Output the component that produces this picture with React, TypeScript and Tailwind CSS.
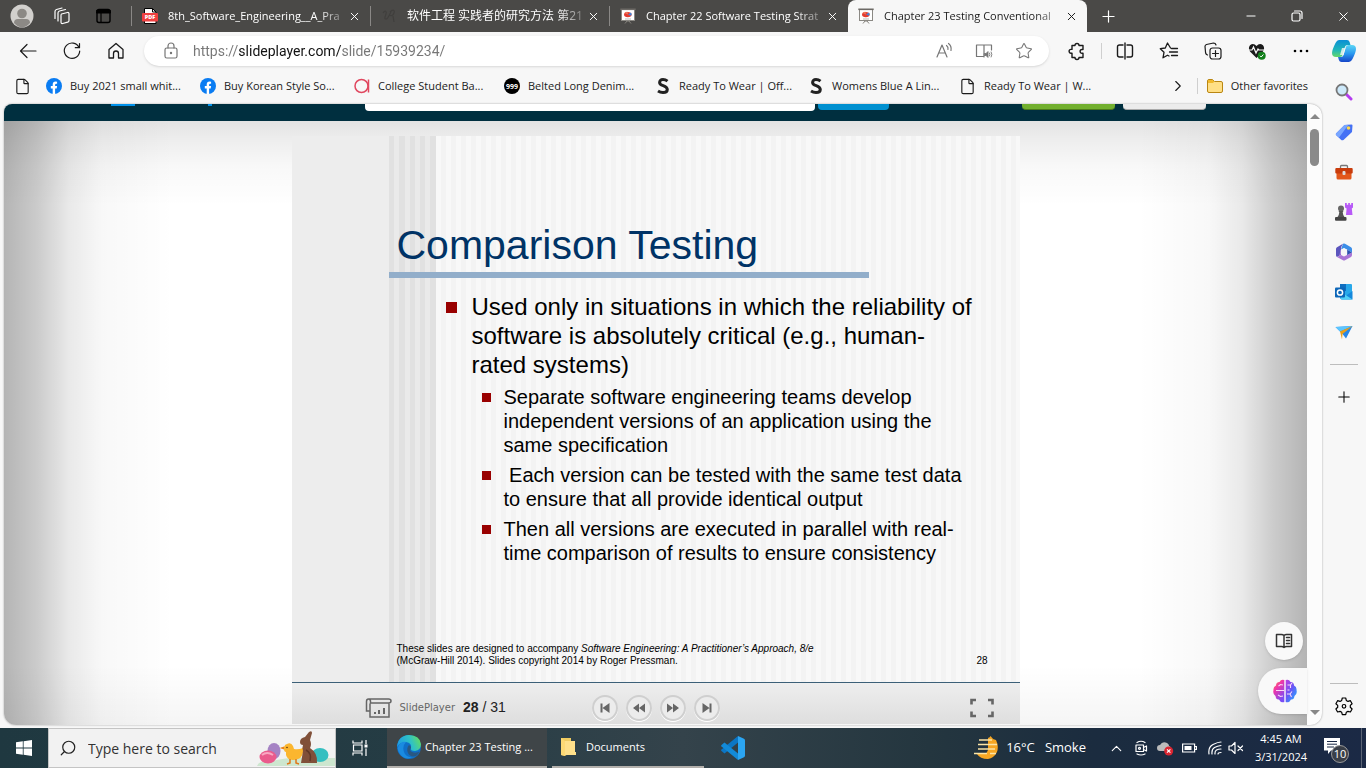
import React from "react";
import { X, Plus, Minus, ChevronUp, ChevronRight, Star, File, Search } from "lucide-react";

const ui = "font-['Open_Sans','Noto_Sans_CJK_SC',sans-serif]";

type IconProps = { className?: string; children: React.ReactNode; box?: string };
function Line({ className = "size-5", children, box = "0 0 20 20" }: IconProps) {
  return (
    <svg viewBox={box} className={`shrink-0 ${className}`} fill="none" stroke="currentColor" strokeWidth="1.2" strokeLinecap="round" strokeLinejoin="round" aria-hidden="true">
      {children}
    </svg>
  );
}
function Art({ className = "size-4", children, box = "0 0 16 16" }: IconProps) {
  return (
    <svg viewBox={box} className={`shrink-0 ${className}`} aria-hidden="true">
      {children}
    </svg>
  );
}

const PdfIcon = () => (
  <Art>
    <path d="M2.500 .5h8l3.500 3.500v11.500h-11.500z" fill="#fff" stroke="#000" />
    <path d="M10.500 .5V4H14" fill="none" stroke="#000" />
    <rect x="0" y="5" width="16" height="8.500" rx="1" fill="#f04040" />
    <text x="8" y="11.300" fontSize="5.500" fontWeight="800" textAnchor="middle" fill="#fff" fontFamily="Open Sans">PDF</text>
  </Art>
);
const SwirlIcon = () => (
  <Art>
    <path d="M2 5c2-3 4-2 3 1s-2 5 0 5 3-4 5-7M9 4c3-3 5-2 4 1s-3 3-5 2M12 8l1 6" fill="none" stroke="#403f3d" strokeWidth="1.200" />
  </Art>
);
const BoardIcon = () => (
  <Art>
    <path d="M5 15.500l2-2.500h2l2 2.500" fill="none" stroke="#85827d" />
    <rect x="1.500" y="1.500" width="13" height="11" fill="#fff" stroke="#8b8984" />
    <path d="M.3 1.300h15.400" stroke="#6d6a66" strokeWidth="1.600" />
    <ellipse cx="7.800" cy="6.600" rx="3.800" ry="2.700" fill="#e33b31" />
    <path d="M8 6.500l3-2q1.500 2 0 3.300z" fill="#4385d8" />
    <path d="M8 6.500l-3.500-1.500q1-1.300 3-1.200z" fill="#f1765a" />
    <path d="M5 11h6" stroke="#bbb" />
  </Art>
);

const tabs = [
  { title: "8th_Software_Engineering__A_Pra", icon: <PdfIcon /> },
  { title: "软件工程 实践者的研究方法 第21", icon: <SwirlIcon /> },
  { title: "Chapter 22 Software Testing Strat", icon: <BoardIcon /> },
  { title: "Chapter 23 Testing Conventional", icon: <BoardIcon />, active: true },
];

function TabBar() {
  return (
    <header className="flex h-8 shrink-0 items-stretch bg-[#4a4947] text-white">
      <div className="flex w-[131px] shrink-0 items-center pl-2.5">
        <button aria-label="Profile">
          <Art className="size-6" box="0 0 24 24">
            <circle cx="12" cy="12" r="11.500" fill="#d2d0cd" />
            <circle cx="12" cy="9.500" r="4.800" fill="#8c8985" />
            <path d="M4 19q0-4 4-4h8q4 0 4 4-3.500 4.200-8 4.200T4 19z" fill="#8c8985" />
          </Art>
        </button>
        <button aria-label="Workspaces" className="ml-[18px]">
          <Line className="size-5">
            <path d="M9.500 8l6-1.500q1.500-.3 1.500 1.300v6.700q0 1.300-1.300 1.700l-5 1.300Q9 18 9 16V9.500Q9 8.200 9.500 8z" />
            <path d="M6 15V7q0-1.500 1.500-2l6-1.500M3 12.500V5.500Q3 4 4.500 3.500L10 2" />
          </Line>
        </button>
        <button aria-label="Tab actions" className="ml-[23px] text-black">
          <Line className="size-[18px]" box="0 0 18 18">
            <rect x="2" y="2.500" width="13" height="13" rx="2" strokeWidth="1.400" />
            <path d="M2 4h13M2 5.500h13" strokeWidth="2" />
            <path d="M6 6v9" />
          </Line>
        </button>
      </div>
      <nav className="flex min-w-0" aria-label="Tabs">
        {tabs.map((t) => (
          <div
            key={t.title}
            className={`flex w-[239px] items-center pr-1.5 pl-2.5 ${t.active ? "rounded-t-lg bg-[#f7f7f7] text-[#1b1b1b]" : ""}`}
          >
            {!t.active && <span className="-ml-2.5 mr-2.5 h-5 w-px bg-[#8a8886]" />}
            {t.icon}
            <a
              href="#tab"
              className={`ml-2.5 min-w-0 flex-1 overflow-hidden whitespace-nowrap [mask-image:linear-gradient(to_right,#000_85%,#0004)] ${t.title.startsWith("软") ? "text-xs" : "text-[11px]"}`}
            >
              {t.title}
            </a>
            <button aria-label={`Close ${t.title}`} className="flex size-5 shrink-0 items-center justify-center">
              <X size={13} strokeWidth={1.800} />
            </button>
          </div>
        ))}
      </nav>
      <button aria-label="New tab" className="ml-3 flex items-center">
        <Plus size={19} strokeWidth={1.500} />
      </button>
      <div className="ml-auto flex items-center">
        <button aria-label="Minimize" className="flex w-[46px] justify-center"><Minus size={14} strokeWidth={1.700} /></button>
        <button aria-label="Restore" className="flex w-[46px] justify-center">
          <Line className="size-3" box="0 0 12 12">
            <rect x="1" y="3" width="8" height="8" rx="1.500" />
            <path d="M3.500 1H9q2 0 2 2v5.500" />
          </Line>
        </button>
        <button aria-label="Close" className="flex w-[46px] justify-center"><X size={15} strokeWidth={1.600} /></button>
      </div>
    </header>
  );
}

function Toolbar() {
  return (
    <div className="flex h-[38px] items-center pr-[11px] pl-[18px] text-[#1b1b1b]">
      <button aria-label="Back"><Line><path d="M18 10H2.500M9 3.500L2.500 10 9 16.500" /></Line></button>
      <button aria-label="Refresh" className="ml-6"><Line><path d="M17 6.500A7.700 7.700 0 1 0 17.700 10M17.500 2.500v4.200h-4.200" /></Line></button>
      <button aria-label="Home" className="ml-6"><Line><path d="M3 8.500L10 2.500l7 6V17h-4.500v-4.500a2.500 2.500 0 0 0-5 0V17H3z" strokeWidth="1.300" /></Line></button>
      <div className="ml-[18px] flex h-[30px] min-w-0 flex-1 items-center rounded-full bg-white px-4 text-[#767676] shadow-sm">
        <Line className="size-[22px]" box="0 0 22 22">
          <rect x="5" y="8" width="12" height="10" rx="1.800" />
          <path d="M8 8V6a3 3 0 0 1 6 0v2" />
          <circle cx="11" cy="13" r=".6" fill="currentColor" />
        </Line>
        <input
          aria-label="Address"
          defaultValue="https://slideplayer.com/slide/15939234/"
          className="ml-[11px] min-w-0 flex-1 bg-[linear-gradient(to_right,#767676_45px,#111_45px,#111_149px,#767676_149px)] bg-clip-text font-['Roboto',sans-serif] text-sm text-transparent outline-none"
        />
        <button aria-label="Read aloud">
          <Line className="size-[18px]" box="0 0 18 18"><path d="M2 15L7 3l5 12M3.800 11h6.400M11.500 3.500q2 1.500 1.500 4M13.500 1.500q3.300 2.500 2.500 7" /></Line>
        </button>
        <button aria-label="Immersive reader" className="ml-[22px]">
          <Line className="size-[18px]" box="0 0 18 18">
            <path d="M9 3v12M9 3H1.500v11.500H9M9 3h7.500v5" />
            <path d="M9.500 11.500h1.500l2-2v6l-2-2H9.500z" fill="currentColor" strokeWidth=".8" />
            <path d="M14.500 11q1 1.500 0 3M16.200 10q1.500 2.500 0 5" strokeWidth=".9" />
          </Line>
        </button>
        <button aria-label="Add to favorites" className="ml-[22px]"><Star size={18} strokeWidth={1.400} /></button>
      </div>
      <div className="ml-[18px] flex items-center">
        <button aria-label="Extensions"><Line><path d="M5 4.500h3a2 2 0 0 1 4 0h4v4h-1a1.800 1.800 0 0 0 0 3.800h1v4.200h-4a2 2 0 0 1-4 0H5v-4.300H4a1.900 1.900 0 0 1 0-3.800h1z" strokeWidth="1.400" /></Line></button>
        <span className="ml-[14px] h-4 w-px bg-[#cfcfcf]" />
        <button aria-label="Split screen" className="ml-[13px]"><Line><path d="M8 4H4.500Q2.500 4 2.500 6v8q0 2 2 2H8M12 4h3.500q2 0 2 2v8q0 2-2 2H12M10 2v16" strokeWidth="1.400" /></Line></button>
        <button aria-label="Favorites" className="ml-6">
          <Line><path d="M11.500 7L8.500 2 6.300 7l-5 .7 3.700 3.600L4 16.800l4.500-2.600 1.500.8M12.500 7.500h6M10.500 11h8M12.500 14.500h6" strokeWidth="1.300" /></Line>
        </button>
        <button aria-label="Collections" className="ml-6">
          <Line>
            <rect x="7" y="7" width="11" height="11" rx="2.500" /><path d="M12.500 9.500v6M9.500 12.500h6M4.500 14Q3 13.500 2.600 12L2 5.500Q2 4 3.500 3.500l7-1.500Q12.500 2 13 4" />
          </Line>
        </button>
        <button aria-label="Browser essentials" className="ml-6">
          <Art className="size-5" box="0 0 20 20">
            <path d="M9.500 17L3 10.500Q.8 7 3 4.200 6.500 1.500 9.500 5q3-3.500 6.500-.8 2.200 2.800 0 6.300z" fill="#1b1b1b" />
            <path d="M1 9h4l1.500-3 2.500 6 2-4 1 1h6" fill="none" stroke="#f7f7f7" strokeWidth="1.200" />
            <circle cx="14.700" cy="14.700" r="4" fill="#12801b" /><path d="M13 14.800l1.200 1.200 2.200-2.500" fill="none" stroke="#fff" />
          </Art>
        </button>
        <button aria-label="Settings and more" className="ml-6">
          <Art className="size-5" box="0 0 20 20"><circle cx="4" cy="10" r="1.300" /><circle cx="10" cy="10" r="1.300" /><circle cx="16" cy="10" r="1.300" /></Art>
        </button>
      </div>
    </div>
  );
}

const FbIcon = () => (
  <Art>
    <circle cx="8" cy="8" r="8" fill="#0a7cf2" />
    <path d="M6.700 16v-5.500H4.800V8h1.900V6.500q0-3 2.900-3 .8 0 1.500.2v2.100h-.9q-1.100 0-1.100 1.100V8h2l-.4 2.500H9.100V16z" fill="#fff" />
  </Art>
);
const PageIcon = () => <File size={17} strokeWidth={1.600} className="shrink-0" />;
const AIcon = () => (
  <Art><circle cx="7.500" cy="8" r="6.500" fill="none" stroke="#e0475f" strokeWidth="1.500" /><path d="M14.500 1.500v13" stroke="#e0475f" strokeWidth="1.500" /></Art>
);
const NineIcon = () => (
  <Art><circle cx="8" cy="8" r="8" fill="#000" /><text x="8" y="10.500" fontSize="7" fontWeight="700" textAnchor="middle" fill="#fff" fontFamily="Open Sans">999</text></Art>
);
const SIcon = () => (
  <Art>
    <path d="M12.500 3.200Q10.500 1.600 8 1.600 4.600 1.600 4.600 4.400 4.600 6.400 8.200 7.600 12.300 9 12.300 11.500 12.300 14.500 8 14.500 5.300 14.500 3 13" fill="none" stroke="#222" strokeWidth="3" />
  </Art>
);

const bookmarks = [
  { label: "Buy 2021 small whit...", icon: <FbIcon />, w: "w-[154px]" },
  { label: "Buy Korean Style So...", icon: <FbIcon />, w: "w-[154px]" },
  { label: "College Student Ba...", icon: <AIcon />, w: "w-[150px]" },
  { label: "Belted Long Denim...", icon: <NineIcon />, w: "w-[151px]" },
  { label: "Ready To Wear | Off...", icon: <SIcon />, w: "w-[153px]" },
  { label: "Womens Blue A Lin...", icon: <SIcon />, w: "w-[151px]" },
  { label: "Ready To Wear | W...", icon: <PageIcon />, w: "w-[150px]" },
];

function Bookmarks() {
  return (
    <nav className="flex h-[34px] items-center pr-[14px] pb-0.5 pl-[14px] text-[11px] text-[#1b1b1b]" aria-label="Favorites bar">
      <a href="#page" aria-label="Page" className="mr-[15px]"><PageIcon /></a>
      {bookmarks.map((b) => (
        <a key={b.label} href="#bookmark" className={`flex shrink-0 items-center gap-2 whitespace-nowrap ${b.w}`}>
          {b.icon}
          {b.label}
        </a>
      ))}
      <button aria-label="More favorites" className="ml-auto"><ChevronRight size={18} strokeWidth={1.500} /></button>
      <span className="mr-[9px] ml-2.5 h-4 w-px bg-[#cfcfcf]" />
      <a href="#other" className="flex items-center gap-2 whitespace-nowrap">
        <Art>
          <path d="M.5 3q0-1.500 1.500-1.500h3.500L7.500 3.500H14q1.500 0 1.500 1.500v8q0 1.500-1.500 1.500H2q-1.500 0-1.500-1.500z" fill="#ffdf85" stroke="#b98612" />
          <path d="M1 5h5l1.500-1.500L5.500 2H1z" fill="#f1b92c" />
        </Art>
        Other favorites
      </a>
    </nav>
  );
}

const l2 = [
  ["Separate software engineering teams develop", "independent versions of an application using the", "same specification"],
  ["\u00a0Each version can be tested with the same test data", "to ensure that all provide identical output"],
  ["Then all versions are executed in parallel with real-", "time comparison of results to ensure consistency"],
];

function Slide() {
  return (
    <article className="grid h-[546px] font-['Liberation_Sans',Arial,sans-serif]">
      <div className="col-start-1 row-start-1 flex" aria-hidden="true">
        <div className="w-[97px] bg-[#ededed]" />
        <div className="w-[47px] bg-[repeating-linear-gradient(to_right,#e1e1e1_0,#e1e1e1_11%,#eaeaea_11%,#eaeaea_22%)]" />
        <div className="flex-1 bg-[repeating-linear-gradient(to_right,#f8f8f8_0,#f8f8f8_5px,#f3f3f3_5px,#f3f3f3_10px)]" />
      </div>
      <div className="z-10 col-start-1 row-start-1 flex flex-col pl-[97px]">
        <h1 className="mt-[83px] pl-2 text-[41px] leading-[52px] whitespace-nowrap text-[#003366]">Comparison Testing</h1>
        <div className="mt-px h-1.5 w-[480px] bg-[#92aeca]" />
        <ul className="mt-[14px] pl-[57px] text-black">
          <li className="flex">
            <span className="mt-2.5 mr-[15px] size-[11px] shrink-0 bg-[#990000]" />
            <div>
              <p className="text-[24px] leading-[29px] whitespace-nowrap">
                Used only in situations in which the reliability of<br />software is absolutely critical (e.g., human-<br />rated systems)
              </p>
              <ul className="mt-1.5 flex flex-col gap-1.5 pl-2.5">
                {l2.map((lines) => (
                  <li key={lines[0]} className="flex">
                    <span className="mt-2 mr-[13px] size-[9px] shrink-0 bg-[#990000]" />
                    <p className="text-[20px] leading-6 whitespace-nowrap">
                      {lines.map((l) => <span key={l} className="block">{l}</span>)}
                    </p>
                  </li>
                ))}
              </ul>
            </div>
          </li>
        </ul>
        <footer className="mt-auto mb-[15px] flex items-end justify-between pr-8 pl-2 text-[10px] leading-3 text-black">
          <p>
            These slides are designed to accompany <i>Software Engineering: A Practitioner’s Approach, 8/e</i>
            <br />(McGraw-Hill 2014). Slides copyright 2014 by Roger Pressman.
          </p>
          <span>28</span>
        </footer>
      </div>
    </article>
  );
}

const controls = [
  { label: "First slide", d: "M1.500 1.500h2v9h-2zM10.500 1v10L3.500 6z" },
  { label: "Previous slide", d: "M6 1.500v9L0 6zM12 1.500v9L6 6z" },
  { label: "Next slide", d: "M0 1.500v9L6 6zM6 1.500v9L12 6z" },
  { label: "Last slide", d: "M8.500 1.500h2v9h-2zM1.500 1v10L8.500 6z" },
];

function PlayerBar() {
  return (
    <div className="flex h-[42px] items-center border-t border-[#3c6078] bg-[linear-gradient(#eeeeee,#dedede)] pt-2 pr-[25px] pl-[73px] text-[#666]">
      <Art className="h-5 w-[27px]" box="0 0 27 20">
        <g fill="none" stroke="#666" strokeWidth="1.500">
          <path d="M5 5.500V19h19V5.500M3.500 1h20q2.500 0 2.500 2t-2.500 2H5.500V3.500Q5.500 1 3.500 1T1.500 3.500V13H5" />
        </g>
        <path d="M9 14h2v2H9zM13 12h2v4h-2zM18 10h2v6h-2z" fill="#666" />
      </Art>
      <span className="ml-2 font-['DejaVu_Sans',sans-serif] text-[10px]">SlidePlayer</span>
      <span className="ml-2 w-[129px] font-['Liberation_Sans',sans-serif] text-[14px] text-[#222]"><b>28</b> / 31</span>
      <div className="flex gap-2">
        {controls.map((c) => (
          <button key={c.label} aria-label={c.label} className="flex size-[26px] items-center justify-center rounded-full border-2 border-[#cfcfcf] bg-[#ececec] shadow-[0_1px_0_#fff]">
            <Art className="size-3" box="0 0 12 12"><path d={c.d} fill="#666" /></Art>
          </button>
        ))}
      </div>
      <button aria-label="Full screen" className="ml-auto">
        <Art className="h-5 w-[26px]" box="0 0 26 20"><path d="M2.500 6.500V2h4.500M19 2h4.500v4.500M23.500 13.500V18H19M7 18H2.500v-4.500" fill="none" stroke="#666" strokeWidth="2.600" /></Art>
      </button>
    </div>
  );
}

function Page() {
  return (
    <main className="flex min-h-0 flex-1 overflow-hidden rounded-xl rounded-tl-lg bg-[#fcfcfc] shadow-[0_0_2px_#999]">
      <div className="relative flex min-w-0 flex-1 flex-col">
        <div className="flex h-[17px] shrink-0 items-start bg-[#002f3f]">
          <span className="ml-[107px] h-0.5 w-6 bg-[#0091ea]" />
          <span className="ml-[73px] h-0.5 w-1 bg-[#0091ea]" />
          <span className="ml-[153px] h-[7px] w-[450px] rounded-b bg-white" />
          <span className="ml-[3px] h-1.5 w-[71px] rounded-b bg-[#0090d0]" />
          <span className="ml-auto h-1.5 w-[93px] rounded-b border-b border-[#4a7a1c] bg-[#72b02f]" />
          <span className="mr-[101px] ml-2 h-1.5 w-[83px] rounded-b border-b border-[#aaa] bg-[#ececec]" />
        </div>
        <div className="flex flex-1 justify-center bg-white bg-[linear-gradient(to_right,#0000004b_0,#00000034_33px,#00000016_65px,#00000007_98px,#0000_170px),linear-gradient(to_left,#0000004b_0,#00000034_33px,#00000016_65px,#00000007_98px,#0000_170px),linear-gradient(#0000001c_0,#00000011_20px,#00000007_45px,#0000_85px),linear-gradient(to_top,#0000000a_0,#0000_60px)] pt-[15px]">
          <section className="w-[728px]">
            <Slide />
            <PlayerBar />
          </section>
        </div>
        <button aria-label="Reading mode" className="absolute right-1 bottom-[65px] flex size-[38px] items-center justify-center rounded-full bg-[#f9f9f9] text-[#333] shadow">
          <Line className="size-[18px]" box="0 0 18 18">
            <path d="M9 3.500Q8 2.500 6.500 2.500H1.500v12h5q1.500 0 2.500 1 1-1 2.500-1h5v-12h-5q-1.500 0-2.500 1zM9 3.500v12M11.500 5.500h3M11.500 8.500h3M11.500 11.500h3" strokeWidth="1.500" />
          </Line>
        </button>
        <button aria-label="Assistant" className="absolute right-0 bottom-[11px] flex h-[46px] w-[49px] items-center justify-center rounded-l-full bg-[#f9f9f9] pl-1 shadow">
          <Art className="size-6" box="0 0 24 24">
            <defs>
              <linearGradient id="bl" x1="0" y1="0" x2=".6" y2="1"><stop stopColor="#ffa62b" /><stop offset=".4" stopColor="#f136a8" /><stop offset="1" stopColor="#7a4cf5" /></linearGradient>
              <linearGradient id="br" x1="0" y1="0" x2=".8" y2="1"><stop stopColor="#c03fe0" /><stop offset=".5" stopColor="#6a55f5" /><stop offset="1" stopColor="#25a8ff" /></linearGradient>
            </defs>
            <path d="M11.300 1v22Q7.500 24 6 20.500 3 21 2.500 17-.5 15 .5 11 0 8 3 6.500 3 3 6.500 3 8-.2 11.300 1z" fill="url(#bl)" />
            <path d="M12.700 1v22q3.800 1 5.300-2.500 3 .5 3.500-3.500 3-2 2-6 .5-3-2.500-4.500Q21 3 17.500 3 16-.2 12.700 1z" fill="url(#br)" />
            <path d="M3 11.500h8M5.500 7l2-1.500L10 6M5 16l2.500 1.500L10 17M14.500 6h3l1.500-2M17.500 6v3M14.500 11h2M14 15h3l2-2.500M17 15l1.500 3" fill="none" stroke="#fbd9f7" strokeWidth="1.100" />
          </Art>
        </button>
      </div>
      <div className="flex w-[15px] shrink-0 flex-col items-center py-2.5" aria-hidden="true">
        <Art className="h-[5px] w-2.5" box="0 0 10 5"><path d="M0 5L5 0l5 5z" fill="#888" /></Art>
        <div className="mt-2.5 h-[37px] w-[9px] rounded-full bg-[#8a8a8a]" />
        <Art className="mt-auto h-[5px] w-2.5" box="0 0 10 5"><path d="M0 0l5 5 5-5z" fill="#888" /></Art>
      </div>
    </main>
  );
}

const sideIcons = [
  { label: "Search", art: <><path d="M11 11l5 5" stroke="#b43cf0" strokeWidth="3" strokeLinecap="round" /><circle cx="7" cy="7" r="5.500" fill="#cde9fa" stroke="#777" strokeWidth="1.800" /></> },
  { label: "Shopping", art: <><path d="M1 10.500L9.500 2l7-.5q1 0 1 1L17 9l-8.500 8q-1.500.8-2.500-.2L1 12q-.6-.8 0-1.500z" fill="#4471f5" /><path d="M1 10.500L9.500 2l4-.3L4 14.500 1 12z" fill="#79a6ff" /><circle cx="13.500" cy="5" r="1.800" fill="#ffd84a" /></> },
  { label: "Tools", art: <><path d="M5.500 5V3.500q0-1 1-1h5q1 0 1 1V5" fill="none" stroke="#777" strokeWidth="1.300" /><path d="M1.500 9h15v6q0 1.500-1.500 1.500H3q-1.500 0-1.500-1.500z" fill="#e2571b" /><rect x=".3" y="5" width="17.400" height="5.500" rx="1" fill="#c93c0c" /><rect x="7.500" y="8" width="3" height="4" rx="1" fill="#ddd" /></> },
  { label: "Games", art: <><path d="M10 0h1.800v1.800h1.400V0h1.700v1.800h1.300V0H18v4.500l-1.200 1 .7 6.500H11l.6-6.500-1.600-1z" fill="#b85af7" /><circle cx="6" cy="5.500" r="3" fill="#666" /><path d="M3.500 8h5l-.8 1.200q.2 3 1.800 4.800h-7q1.600-1.800 1.800-4.800z" fill="#555" /><rect x="0" y="14" width="11.500" height="3.800" rx="1" fill="#444" /></> },
  { label: "Microsoft 365", art: <><path d="M8 .8q1-.6 2 0l6 3.400q1 .6 1 1.800v3.500l-5-3L9 5 6 6.500z" fill="#3b8ee8" /><path d="M8 .8L2 4.200Q1 4.800 1 6v6.200q0 1.200 1 1.800l2.500-1.500L6 9V6.500q0-3 2-5.700z" fill="#5b55bd" /><path d="M2 14l6 3.300q1 .6 2 0l6-3.400q1-.6 1-1.800V9.500L12 12l-3 1.500-3-1.500z" fill="#a974d6" /><path d="M6 12V6.500L4 12.700z" fill="#8f66cf" /><path d="M12 6.500l5 3-5 2.500z" fill="#2c4fb0" /><path d="M9 5.300l3.200 1.800v3.800L9 12.700l-3.200-1.800V7.100z" fill="#f7f7f7" /></> },
  { label: "Outlook", art: <><rect x="5" y="1" width="12" height="15" rx="1" fill="#28a8ea" /><path d="M5 1h6v7H5z" fill="#0f6fc0" /><path d="M17.500 8v8.500H6L17.500 8z" fill="#1488dc" /><path d="M6 9l11.500 7.500H6z" fill="#50d0f8" /><rect x="0" y="4.500" width="10" height="10" rx="1" fill="#0c66b8" /><circle cx="5" cy="9.500" r="2.600" fill="none" stroke="#fff" strokeWidth="1.500" /></> },
  { label: "Drop", art: <><path d="M.5 4L17.500 3 11 15.500 7.500 11z" fill="#2687e8" /><path d="M.5 4L17.500 3 5 8.500z" fill="#5cc6ff" /><path d="M5 8.500L17.500 3 7.500 11l-.5 5.500z" fill="#eba018" /></> },
];

function Sidebar() {
  return (
    <aside className="flex w-11 shrink-0 flex-col items-center pb-3">
      <button aria-label="Copilot" className="mt-[7px]">
        <Art className="size-6" box="0 0 24 24">
          <defs>
            <linearGradient id="c1" x1="0" y1="0" x2="0" y2="1"><stop stopColor="#0a8fd6" /><stop offset=".6" stopColor="#21b7b8" /><stop offset="1" stopColor="#65d76b" /></linearGradient>
            <linearGradient id="c2" x1="0" y1="0" x2="0" y2="1"><stop stopColor="#5cd6f5" /><stop offset=".5" stopColor="#2b9af0" /><stop offset="1" stopColor="#1645c8" /></linearGradient>
          </defs>
          <path d="M7 1h8q2 0 2.600 2l.9 3h-3q-2 0-2.600 2l-2.300 8q-.7 2-2.600 2H4q-4 0-4-4 0-3 3.500-10Q5 1 7 1z" fill="url(#c1)" />
          <path d="M17 23H9.500q-2 0-2.600-2L6 18h3q2 0 2.600-2l2.300-8q.7-2 2.600-2H20q4 0 4 4 0 3-3.500 10Q19 23 17 23z" fill="url(#c2)" />
          <path d="M10 9h3.500l-2 7H8z" fill="#f7f7f7" opacity=".8" />
        </Art>
      </button>
      <div className="mt-5 flex flex-col gap-[22px]">
        {sideIcons.map((s) => (
          <button key={s.label} aria-label={s.label}><Art className="size-[18px]" box="0 0 18 18">{s.art}</Art></button>
        ))}
      </div>
      <span className="mt-[23px] h-px w-7 bg-[#bdbdbd]" />
      <button aria-label="Customize" className="mt-[23px]"><Plus size={18} strokeWidth={1.400} /></button>
      <span className="mt-auto h-px w-7 bg-[#bdbdbd]" />
      <button aria-label="Settings" className="mt-3">
        <Line className="size-5">
          <path d="M8.300 2h3.400l.6 2.400 1.700 1 2.400-.7 1.700 3-1.800 1.700v1.900l1.800 1.700-1.700 3-2.400-.7-1.700 1-.6 2.400H8.300l-.6-2.400-1.700-1-2.400.7-1.700-3 1.800-1.700V9.400L1.900 7.700l1.700-3 2.400.7 1.700-1z" />
          <circle cx="10" cy="10.300" r="1.800" />
        </Line>
      </button>
    </aside>
  );
}

function Taskbar() {
  return (
    <footer className="flex h-10 shrink-0 items-stretch bg-[linear-gradient(to_right,#1f3840_0,#253c44_30%,#34434b_50%,#24363f_68%,#1b2c3f_80%,#1b2945_100%)] text-[11px] text-white">
      <button aria-label="Start" className="flex w-12 items-center justify-center">
        <Art><path d="M0 2.300L6.800 1.300V7.600H0zM7.600 1.200L16 0v7.600H7.600zM0 8.400h6.800v6.300L0 13.700zM7.600 8.400H16V16l-8.400-1.200z" fill="#fff" /></Art>
      </button>
      <label className="flex w-72 items-center border border-[#c4c4c4] bg-[#f2f2f2] pl-2.5 text-[#222]">
        <Search size={18} strokeWidth={1.600} className="-scale-x-100" />
        <input aria-label="Type here to search" placeholder="Type here to search" className="ml-[11px] w-36 bg-transparent text-[14px] outline-none placeholder:text-[#333]" />
        <Art className="ml-auto h-9 w-[78px]" box="0 0 78 36">
          <path d="M0 36q2-6 12-4 20-6 40-4h26v8z" fill="#cde6cf" />
          <ellipse cx="17" cy="21" rx="6.500" ry="8" fill="#a583c4" />
          <ellipse cx="11" cy="27" rx="8.500" ry="6.500" fill="#ea5b8c" /><path d="M5 25q5-4 11 0" stroke="#f9a8c2" strokeWidth="2" fill="none" />
          <path d="M30 14q4-2 6 2l1 3q4 1 9-1 1 9-5 11-10 3-12-4v-3q-2 0-2-3l-4-1 4-1q1-3 3-3z" fill="#fbb62f" />
          <path d="M23 18l4-1.500v3z" fill="#e8801c" /><circle cx="30" cy="17.500" r=".8" fill="#5b3410" />
          <path d="M33 29v4l-3 1M39 29v4l3 1" stroke="#e07718" fill="none" strokeWidth="1.500" />
          <ellipse cx="63" cy="25" rx="8.500" ry="7" fill="#35bfc0" />
          <path d="M43 12q0-4 5-5l4-5q3-2 3 1l-2 7q2 4 0 8 8 5 7 15H44l2-12q-1-4 0-6-3 0-3-3z" fill="#805039" /><path d="M49 20q6 3 4 11" stroke="#5f3826" fill="none" strokeWidth="1.500" />
        </Art>
      </label>
      <button aria-label="Task view" className="flex w-[51px] items-center justify-center pr-1">
        <Art className="size-4"><path d="M1 .5v2.500h9V.5M1 15.500V13h9v2.500M1.500 5h8.500v6H1.500zM14 0v4M14 8.500V16" fill="none" stroke="#fff" strokeWidth="1.200" /><path d="M12.500 4.500h3v3h-3z" fill="#fff" /></Art>
      </button>
      <button className="flex w-40 items-center gap-1 border-b-2 border-[#b3b0ac] bg-[#3f4548] pl-2.5 whitespace-nowrap">
        <Art className="size-6" box="0 0 24 24">
          <defs>
            <linearGradient id="e1" x1="0" y1=".3" x2="1" y2="0"><stop stopColor="#1f9ee0" /><stop offset=".5" stopColor="#2fc2c5" /><stop offset="1" stopColor="#6fe04c" /></linearGradient>
          </defs>
          <circle cx="12" cy="12" r="12" fill="#0f6fc8" />
          <path d="M0 12Q1 .5 12 0q11 .5 12 9 0 6-6 7-5 0-4-3 1-5-5-6-6 0-9 5z" fill="url(#e1)" />
          <path d="M9 7q-4 4-2 10t9 5q-8 4-13-3T4 8q2-2 5-1z" fill="#1a8be0" />
          <path d="M14 12.500q-2.500 4 2.500 5 3.500.5 6-1-1 2.500-3.500 4.500-6 1.500-8-3t1-8q2 1 2 2.500z" fill="#3f4548" opacity=".55" />
        </Art>
        Chapter 23 Testing ...
      </button>
      <button className="ml-[5px] flex w-[152px] items-center gap-[9px] border-b-2 border-[#b3b0ac] pl-2">
        <Art className="h-5 w-[17px]" box="0 0 17 20"><path d="M1 1h10v14l-6 4-4-1z" fill="#f0cb60" /><path d="M5 4h10v11h1v3H5z" fill="#ffe08a" /><path d="M1 1l4 3v15l-4-1z" fill="#fdd975" /></Art>
        Documents
      </button>
      <button aria-label="Visual Studio Code" className="ml-[17px] flex items-center">
        <Art className="size-6" box="0 0 24 24">
          <path d="M17 0v6.500L3.500 17.500.5 15q-.8-.8 0-1.500z" fill="#0b76c5" />
          <path d="M17 24v-6.500L3.500 6.500.5 9q-.8.8 0 1.500z" fill="#128ad8" />
          <path d="M17 0l6 2.700q1 .6 1 1.500v15.600q0 .9-1 1.500L17 24z" fill="#2ba5f2" />
        </Art>
      </button>
      <div className="ml-auto flex items-center">
        <Art className="size-6" box="0 0 24 24"><path d="M14 2q2-.5 2.500-2 1.500 3 5.500 4 3 6 1 12-3 6-9 7-8 0-11-5h9l2-4V8z" fill="#f6a623" /><path d="M5 4h13M4 8.500h19M4 13h17M0 17.500h13M16 17.500h6" stroke="#fce4a5" strokeWidth="1.700" /></Art>
        <span className="ml-2 text-[13px] whitespace-nowrap">16°C&nbsp;&nbsp; Smoke</span>
        <ChevronUp size={17} strokeWidth={1.600} className="ml-[22px]" />
        <Line className="ml-2 size-4" box="0 0 16 16"><path d="M4 2.500q4-2.500 8 0M4 14q4 2 8 0M3 5h7.500v6.500H3zM10.500 7.500l3-1.500v5l-3-1.500" /><circle cx="6.500" cy="8.300" r="1" /></Line>
        <Art className="ml-2 h-4 w-[17px]" box="0 0 17 16"><path d="M3 11q-3 0-3-3t3-3q2-3.500 5.500-2.500T12 6q2 0 2 5z" fill="#bbb" /><circle cx="11.700" cy="11" r="4.500" fill="#da2531" /><path d="M10 9.300l3.400 3.400M13.400 9.300L10 12.700" stroke="#fff" strokeWidth="1.200" /></Art>
        <Art className="ml-2 h-4 w-[15px]" box="0 0 15 16"><path d="M.6 4h12v8H.6zM13 6.500h1.500v3H13" fill="none" stroke="#fff" strokeWidth="1.200" /><path d="M2.500 6h7v4h-7z" fill="#fff" /></Art>
        <Line className="ml-[11px] size-3.5" box="0 0 14 14"><path d="M1 13Q0 6 5 3.500T13 1M4 13q-.5-5 2.500-6.500T13 4.500M7 13q-.3-3 1.500-4T13 8M10 13q0-1.500 3-1.500" /></Line>
        <Line className="ml-[6px] size-4" box="0 0 16 16"><path d="M1 6h2.500L7 2.500v11L3.500 10H1zM10 6l4.500 4.500M14.500 6L10 10.500" /></Line>
        <div className="ml-[7px] w-[60px] text-center leading-[18px] whitespace-nowrap">4:45 AM<br />3/31/2024</div>
        <button aria-label="10 notifications" className="relative mr-[11px] ml-[13px] h-7 w-[26px]">
          <Art className="absolute top-1 left-0 size-4"><path d="M0 0h16v12.500H7L4 16v-3.500H0z" fill="#fff" /><path d="M3 3.500h10M3 6.200h10M3 9h7" stroke="#1b2945" /></Art>
          <span className="absolute top-[11px] left-[7px] flex size-[18px] items-center justify-center rounded-full border border-[#999] bg-[#3a3f48] text-[11px]">10</span>
        </button>
        <span className="mr-1 h-10 w-px bg-[#5b6475]" />
      </div>
    </footer>
  );
}

export default function App() {
  return (
    <div className={`flex h-screen flex-col overflow-hidden bg-[#f7f7f7] ${ui}`}>
      <TabBar />
      <div className="flex min-h-0 flex-1">
        <div className="flex min-w-0 flex-1 flex-col pb-[3px]">
          <Toolbar />
          <Bookmarks />
          <div className="flex min-h-0 flex-1 pl-1"><Page /></div>
        </div>
        <Sidebar />
      </div>
      <Taskbar />
    </div>
  );
}
